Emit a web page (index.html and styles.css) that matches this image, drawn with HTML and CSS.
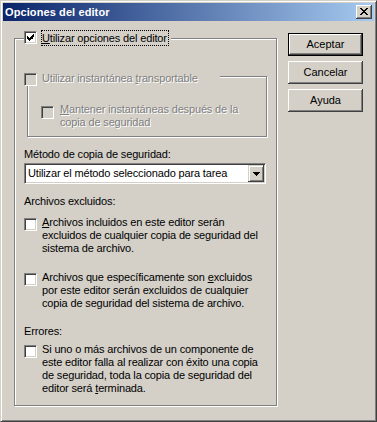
FILE: index.html
```html
<!DOCTYPE html>
<html lang="es">
<head>
  <meta charset="UTF-8">
  <title>Opciones del editor</title>
  <link rel="stylesheet" href="styles.css">
</head>
<body>
  <div class="window">
    <div class="titlebar">
      <span class="title">Opciones del editor</span>
      <button class="close-btn" type="button" aria-label="Cerrar">
        <svg width="8" height="7" viewBox="0 0 8 7"><path d="M0 0h2v1H0zM6 0h2v1H6zM1 1h2v1H1zM5 1h2v1H5zM2 2h4v1H2zM3 3h2v1H3zM2 4h4v1H2zM1 5h2v1H1zM5 5h2v1H5zM0 6h2v1H0zM6 6h2v1H6z" fill="#000"/></svg>
      </button>
    </div>
    <div class="dialog-body">
      <div class="group main-group">
        <div class="main-legend">
          <span class="check">
            <svg width="7" height="7" viewBox="0 0 7 7"><path d="M6 0h1v3H6zM5 1h1v4H5zM4 2h1v3H4zM0 2h1v3H0zM1 3h1v3H1zM2 4h1v3H2zM3 3h1v3H3z" fill="#000"/></svg>
          </span>
          <span class="focus-label"><u>U</u>tilizar opciones del editor</span>
        </div>

        <div class="group sub-group">
          <div class="sub-legend disabled">
            <span class="check check-off"></span>
            <span class="check-text">Utilizar instantánea <u>t</u>ransportable</span>
          </div>
          <div class="check-row nested disabled">
            <span class="check check-off"></span>
            <span class="check-text"><u>M</u>antener instantáneas después de la<br>copia de seguridad</span>
          </div>
        </div>

        <div class="field-label method-label">Método de copia de seguridad:</div>
        <div class="select">
          <span class="select-value">Utilizar el método seleccionado para tarea</span>
          <span class="select-btn">
            <svg width="7" height="4" viewBox="0 0 7 4"><path d="M0 0h7v1H0zM1 1h5v1H1zM2 2h3v1H2zM3 3h1v1H3z" fill="#000"/></svg>
          </span>
        </div>

        <div class="field-label excl-label">Archivos excluidos:</div>
        <div class="check-row row-1">
          <span class="check"></span>
          <span class="check-text"><u>A</u>rchivos incluidos en este editor serán<br>excluidos de cualquier copia de seguridad del<br>sistema de archivo.</span>
        </div>
        <div class="check-row row-2">
          <span class="check"></span>
          <span class="check-text">Archivos que específicamente son <u>e</u>xcluidos<br>por este editor serán excluidos de cualquier<br>copia de seguridad del sistema de archivo.</span>
        </div>

        <div class="field-label err-label">Errores:</div>
        <div class="check-row row-3">
          <span class="check"></span>
          <span class="check-text">Si uno o más archivos de un componente de<br>este editor falla al realizar con éxito una copia<br>de seguridad, toda la copia de seguridad del<br>editor será <u>t</u>erminada.</span>
        </div>
      </div>

      <div class="buttons">
        <button class="btn btn-default" type="button">Aceptar</button>
        <button class="btn" type="button">Cancelar</button>
        <button class="btn" type="button">Ayuda</button>
      </div>
    </div>
  </div>
</body>
</html>
```

FILE: styles.css
```css
* {
  box-sizing: border-box;
  margin: 0;
  padding: 0;
}
body {
  font-family: 'Liberation Sans', Arial, sans-serif;
  font-size: 11px;
  line-height: 13px;
  letter-spacing: -0.15px;
  color: #000;
  background: #d4d0c8;
}
.window {
  width: 377px;
  height: 422px;
  border: 1px solid;
  border-color: #d4d0c8 #404040 #404040 #d4d0c8;
  box-shadow: inset 1px 1px #fff, inset -1px -1px #808080;
  padding: 2px;
  background: #d4d0c8;
  display: flex;
  flex-direction: column;
}
.titlebar {
  height: 18px;
  background: linear-gradient(to right, #0a246a, #a6caf0);
  display: flex;
  align-items: center;
  justify-content: space-between;
  padding: 0 2px;
}
.title {
  color: #fff;
  font-weight: bold;
  font-size: 11px;
  letter-spacing: 0.1px;
}
.close-btn {
  width: 16px;
  height: 14px;
  border: none;
  background: #d4d0c8;
  box-shadow: inset -1px -1px #404040, inset 1px 1px #fff, inset -2px -2px #808080;
  display: flex;
  align-items: flex-start;
  justify-content: center;
  padding-top: 3px;
}
.close-btn svg {
  display: block;
}
.dialog-body {
  display: flex;
  align-items: flex-start;
  padding-left: 11px;
}

/* group boxes */
.group {
  position: relative;
  border: 1px solid #808080;
  box-shadow: inset 1px 1px #fff, 1px 1px #fff;
}
.main-group {
  margin-top: 17px;
  width: 263px;
  height: 368px;
  padding: 37px 0 0 9px;
}
.main-legend {
  position: absolute;
  left: 9px;
  top: -9px;
  height: 16px;
  display: flex;
  align-items: flex-start;
  background: #d4d0c8;
  padding-right: 2px;
}
.main-legend .check {
  margin-top: 1px;
}
.focus-label {
  margin-left: 4px;
  border: 1px dotted #000;
  line-height: 14px;
  padding-right: 1px;
}
.sub-group {
  margin-left: 3px;
  width: 240px;
  height: 61px;
  padding: 26px 0 0 13px;
}
.sub-legend {
  position: absolute;
  left: -4px;
  top: -5px;
  width: 196px;
  height: 13px;
  display: flex;
  background: #d4d0c8;
}
.sub-legend .check {
  margin-top: 1px;
}

/* checkboxes */
.check {
  flex: none;
  width: 13px;
  height: 13px;
  background: #fff;
  border: 1px solid;
  border-color: #808080 #fff #fff #808080;
  box-shadow: inset 1px 1px #404040, inset -1px -1px #d4d0c8;
  display: flex;
  align-items: center;
  justify-content: center;
}
.check svg {
  display: block;
}
.check-off {
  background: #d4d0c8;
}
.check-row {
  display: flex;
  align-items: flex-start;
}
.check-row .check {
  margin-top: 2px;
}
.check-text {
  margin-left: 5px;
}
.nested .check {
  margin-top: 3px;
}
.nested .check-text {
  margin-left: 6px;
}
.disabled {
  color: #808080;
  text-shadow: 1px 1px #fff;
}

/* labels and select */
.method-label {
  margin-top: 11px;
}
.select {
  margin-top: 2px;
  width: 242px;
  height: 21px;
  background: #fff;
  border: 1px solid;
  border-color: #808080 #fff #fff #808080;
  box-shadow: inset 1px 1px #404040, inset -1px -1px #d4d0c8;
  display: flex;
  align-items: center;
  justify-content: space-between;
  padding: 1px 1px 1px 3px;
}
.select-btn {
  width: 16px;
  height: 17px;
  background: #d4d0c8;
  box-shadow: inset -1px -1px #404040, inset 1px 1px #d4d0c8, inset 2px 2px #fff, inset -2px -2px #808080;
  display: flex;
  align-items: center;
  justify-content: center;
}
.select-btn svg {
  display: block;
}
.excl-label {
  margin-top: 11px;
}
.row-1 {
  margin-top: 8px;
}
.row-2 {
  margin-top: 16px;
}
.err-label {
  margin-top: 15px;
}
.row-3 {
  margin-top: 5px;
}

/* buttons */
.buttons {
  margin: 12px 0 0 11px;
  display: flex;
  flex-direction: column;
  gap: 5px;
}
.btn {
  width: 75px;
  height: 23px;
  font: inherit;
  color: #000;
  border: none;
  background: #d4d0c8;
  box-shadow: inset -1px -1px #404040, inset 1px 1px #fff, inset -2px -2px #808080;
}
.btn-default {
  box-shadow: inset 0 0 0 1px #000, inset -2px -2px #404040, inset 2px 2px #fff, inset -3px -3px #808080;
}
```
